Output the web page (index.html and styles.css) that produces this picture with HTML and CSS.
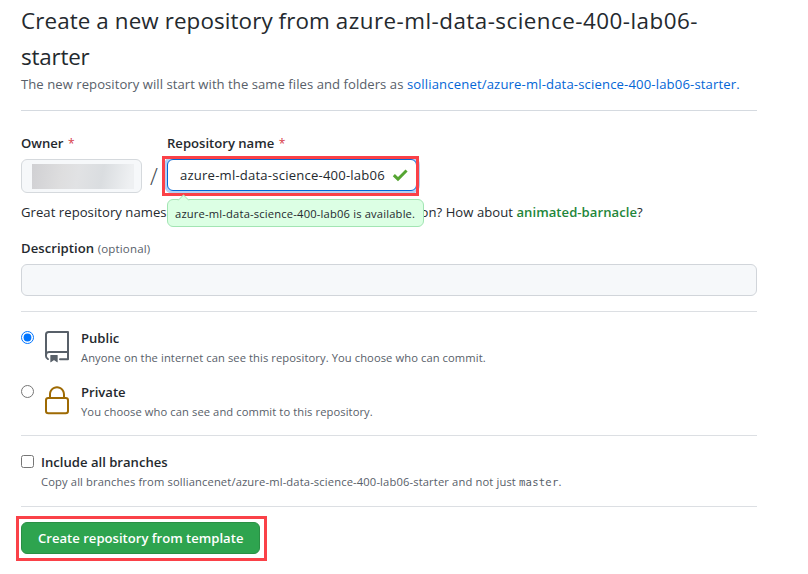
FILE: index.html
```html
<!DOCTYPE html>
<html lang="en">
<head>
<meta charset="utf-8">
<title>Create a new repository</title>
<link rel="stylesheet" href="styles.css">
</head>
<body>
<main class="page">
  <header class="head">
    <h1 class="title">Create a new repository from <span class="title-slug">azure-ml-data-science-400-lab06-</span><br><span class="title-tail">starter</span></h1>
    <p class="lead">The new repository will start with the same files and folders as <a class="link">solliancenet/azure-ml-data-science-400-lab06-starter.</a></p>
  </header>
  <section class="naming">
    <div class="fields">
      <div class="owner">
        <div class="label owner-label">Owner <span class="req">*</span></div>
        <div class="owner-box"><div class="redacted"></div></div>
      </div>
      <div class="slash">/</div>
      <div class="repo">
        <div class="label repo-label">Repository name <span class="req">*</span></div>
        <div class="repo-box">
          <span class="repo-value">azure-ml-data-science-400-lab06</span>
          <svg class="check" viewBox="0 0 16 13"><path d="M0.8 7.2 2.9 5 6 8 13.5 0.5 15.6 2.6 6 12.2Z" fill="#55a532"/></svg>
          <div class="mark mark-repo"></div>
          <div class="tip">azure-ml-data-science-400-lab06 is available.</div>
        </div>
      </div>
    </div>
    <p class="hint">Great repository names are short and memorable. Need inspiration? How about <b>animated-barnacle</b>?</p>
    <div class="label desc-label">Description <span class="optional">(optional)</span></div>
    <input class="desc" type="text" aria-label="Description">
  </section>
  <section class="visibility">
    <label class="choice">
      <input class="radio" type="radio" name="visibility" checked>
      <svg class="icon repo-icon" viewBox="0 0 24 24"><path fill-rule="evenodd" d="M3 2.75A2.75 2.75 0 015.75 0h14.5a.75.75 0 01.75.75v20.5a.75.75 0 01-.75.75h-6a.75.75 0 010-1.5h5.25v-4H6A1.5 1.5 0 004.5 18v.75c0 .716.43 1.334 1.05 1.605a.75.75 0 01-.6 1.374A3.25 3.25 0 013 18.75v-16zM19.5 1.5V15H6c-.546 0-1.059.146-1.5.401V2.75c0-.69.56-1.25 1.25-1.25H19.5z"/><path d="M7 18.25a.25.25 0 01.25-.25h5a.25.25 0 01.25.25v5.01a.25.25 0 01-.397.201l-2.206-1.604a.25.25 0 00-.294 0L7.397 23.46a.25.25 0 01-.397-.2v-5.01z"/></svg>
      <span class="copy"><span class="label">Public</span><span class="note">Anyone on the internet can see this repository. You choose who can commit.</span></span>
    </label>
    <label class="choice">
      <input class="radio" type="radio" name="visibility">
      <svg class="icon lock-icon" viewBox="0 0 24 24"><path fill-rule="evenodd" d="M6 9V7.25C6 3.845 8.503 1 12 1s6 2.845 6 6.25V9h.5a2.5 2.5 0 012.5 2.5v8a2.5 2.5 0 01-2.5 2.5h-13A2.5 2.5 0 013 19.5v-8A2.5 2.5 0 015.5 9H6zm1.5-1.75C7.5 4.58 9.422 2.5 12 2.5c2.578 0 4.5 2.08 4.5 4.75V9h-9V7.25zm-3 4.25a1 1 0 011-1h13a1 1 0 011 1v8a1 1 0 01-1 1h-13a1 1 0 01-1-1v-8z"/></svg>
      <span class="copy"><span class="label">Private</span><span class="note">You choose who can see and commit to this repository.</span></span>
    </label>
  </section>
  <section class="branches">
    <label class="choice">
      <input class="radio" type="checkbox">
      <span class="copy"><span class="label">Include all branches</span><span class="note branch-note">Copy all branches from solliancenet/azure-ml-data-science-400-lab06-starter and not just <code>master</code>.</span></span>
    </label>
  </section>
  <div class="actions">
    <div class="submit-wrap"><button class="submit">Create repository from template</button><div class="mark mark-submit"></div></div>
  </div>
</main>
</body>
</html>
```
FILE: styles.css
```css
* { box-sizing: border-box; }
body {
  margin: 0;
  background: #fff;
  color: #24292e;
  font: 13.1px/21px "Open Sans", "Noto Sans", sans-serif;
}
.page { width: 736px; min-height: 574px; margin-left: 21px; padding-top: 3px; }
h1, p { margin: 0; font-weight: 400; white-space: nowrap; }
.head { height: 108px; border-bottom: 1px solid #d5dae0; }
.title { font-size: 22.4px; line-height: 36px; height: 71px; letter-spacing: .1px; }
.title-slug { letter-spacing: .47px; }
.title-tail { letter-spacing: -.2px; }
.lead { color: #586069; letter-spacing: .045px; }
.link { color: #0366d6; letter-spacing: .15px; }
.naming { height: 201px; border-bottom: 1px solid #dcdfe3; padding-top: 22px; }
.fields { display: flex; }
.label { display: block; font-weight: 600; white-space: nowrap; height: 21px; }
.req { color: #d73a49; font-weight: 400; font-size: 12px; margin-left: 1px; }
.owner-box {
  width: 121px; height: 34px; margin-top: 5px; padding: 4px 7px 3px 10px;
  border: 1px solid #d5d9dd; border-radius: 6px; background: #f6f8fa;
}
.redacted { height: 25px; background: linear-gradient(100deg, #d0d0d3, #dededf 30%, #e1e2e4 45%, #dadde0 68%, #eef0f2 95%); }
.slash { width: 25px; padding: 33px 0 0 8px; font-size: 23px; line-height: 21px; font-weight: 300; color: #444a50; }
.repo-box {
  position: relative; display: flex; align-items: center;
  width: 250px; height: 32px; margin-top: 5px; padding: 0 8px 0 12px;
  border: 1px solid #0366d6; border-radius: 6px; background: #fff;
  box-shadow: 0 0 0 3px #b3d1f3;
}
.repo-value { white-space: nowrap; letter-spacing: .2px; }
.check { width: 16px; height: 13px; margin-left: auto; }
.mark { position: absolute; border: 3px solid #fa4148; }
.mark-repo { left: -6px; top: -4px; width: 257px; height: 40px; }
.tip {
  position: absolute; z-index: 1; left: -1px; top: 39px; width: 257px; height: 28px; padding: 3px 7px;
  border: 1px solid #a2e5b3; border-radius: 6px; background: #dcffe4;
  font-size: 11.2px; line-height: 21px; letter-spacing: .17px; white-space: nowrap;
}
.tip::before {
  content: ""; position: absolute; left: 11px; top: -4px; width: 8px; height: 8px;
  border: solid #a2e5b3; border-width: 1px 0 0 1px; background: #dcffe4;
  transform: rotate(45deg); clip-path: polygon(0 0, 100% 0, 0 100%);
}
.hint { margin-top: 9px; letter-spacing: .045px; }
.hint b { font-weight: 600; color: #22863a; }
.desc-label { margin-top: 15px; letter-spacing: .05px; }
.optional { font-size: 11.5px; font-weight: 400; letter-spacing: .18px; color: #586069; }
.desc {
  display: block; width: 736px; height: 32px; margin-top: 5px;
  border: 1px solid #d1d5da; border-radius: 6px; background: #f6f8fa;
}
.visibility { height: 124px; border-bottom: 1px solid #dcdfe3; padding-top: 16px; }
.choice { display: flex; height: 54px; }
.radio { width: 13px; height: 13px; margin: 3px 7px 0 0; flex: none; }
.icon { width: 32px; height: 32px; margin: 3px 8px 0 0; flex: none; }
.repo-icon { fill: #586069; }
.lock-icon { fill: #9e6a03; }
.note { display: block; font-size: 11.2px; line-height: 18px; letter-spacing: .08px; color: #586069; white-space: nowrap; }
.branch-note { letter-spacing: .13px; }
.note code { font: 10.6px "DejaVu Sans Mono", monospace; letter-spacing: .2px; }
.branches { height: 71px; border-bottom: 1px solid #dcdfe3; padding-top: 16px; }
.actions { padding-top: 15px; }
.submit-wrap { position: relative; width: 239px; }
.submit {
  display: block; width: 239px; height: 32px; padding: 0 0 0 16px;
  border: 1px solid #2a8f45; border-radius: 6px; background: #2ea44f;
  color: #fff; font: 600 13.1px/20px "Open Sans", "Noto Sans", sans-serif; text-align: left; white-space: nowrap;
}
.mark-submit { left: -5px; top: -6px; width: 251px; height: 45px; }
```
